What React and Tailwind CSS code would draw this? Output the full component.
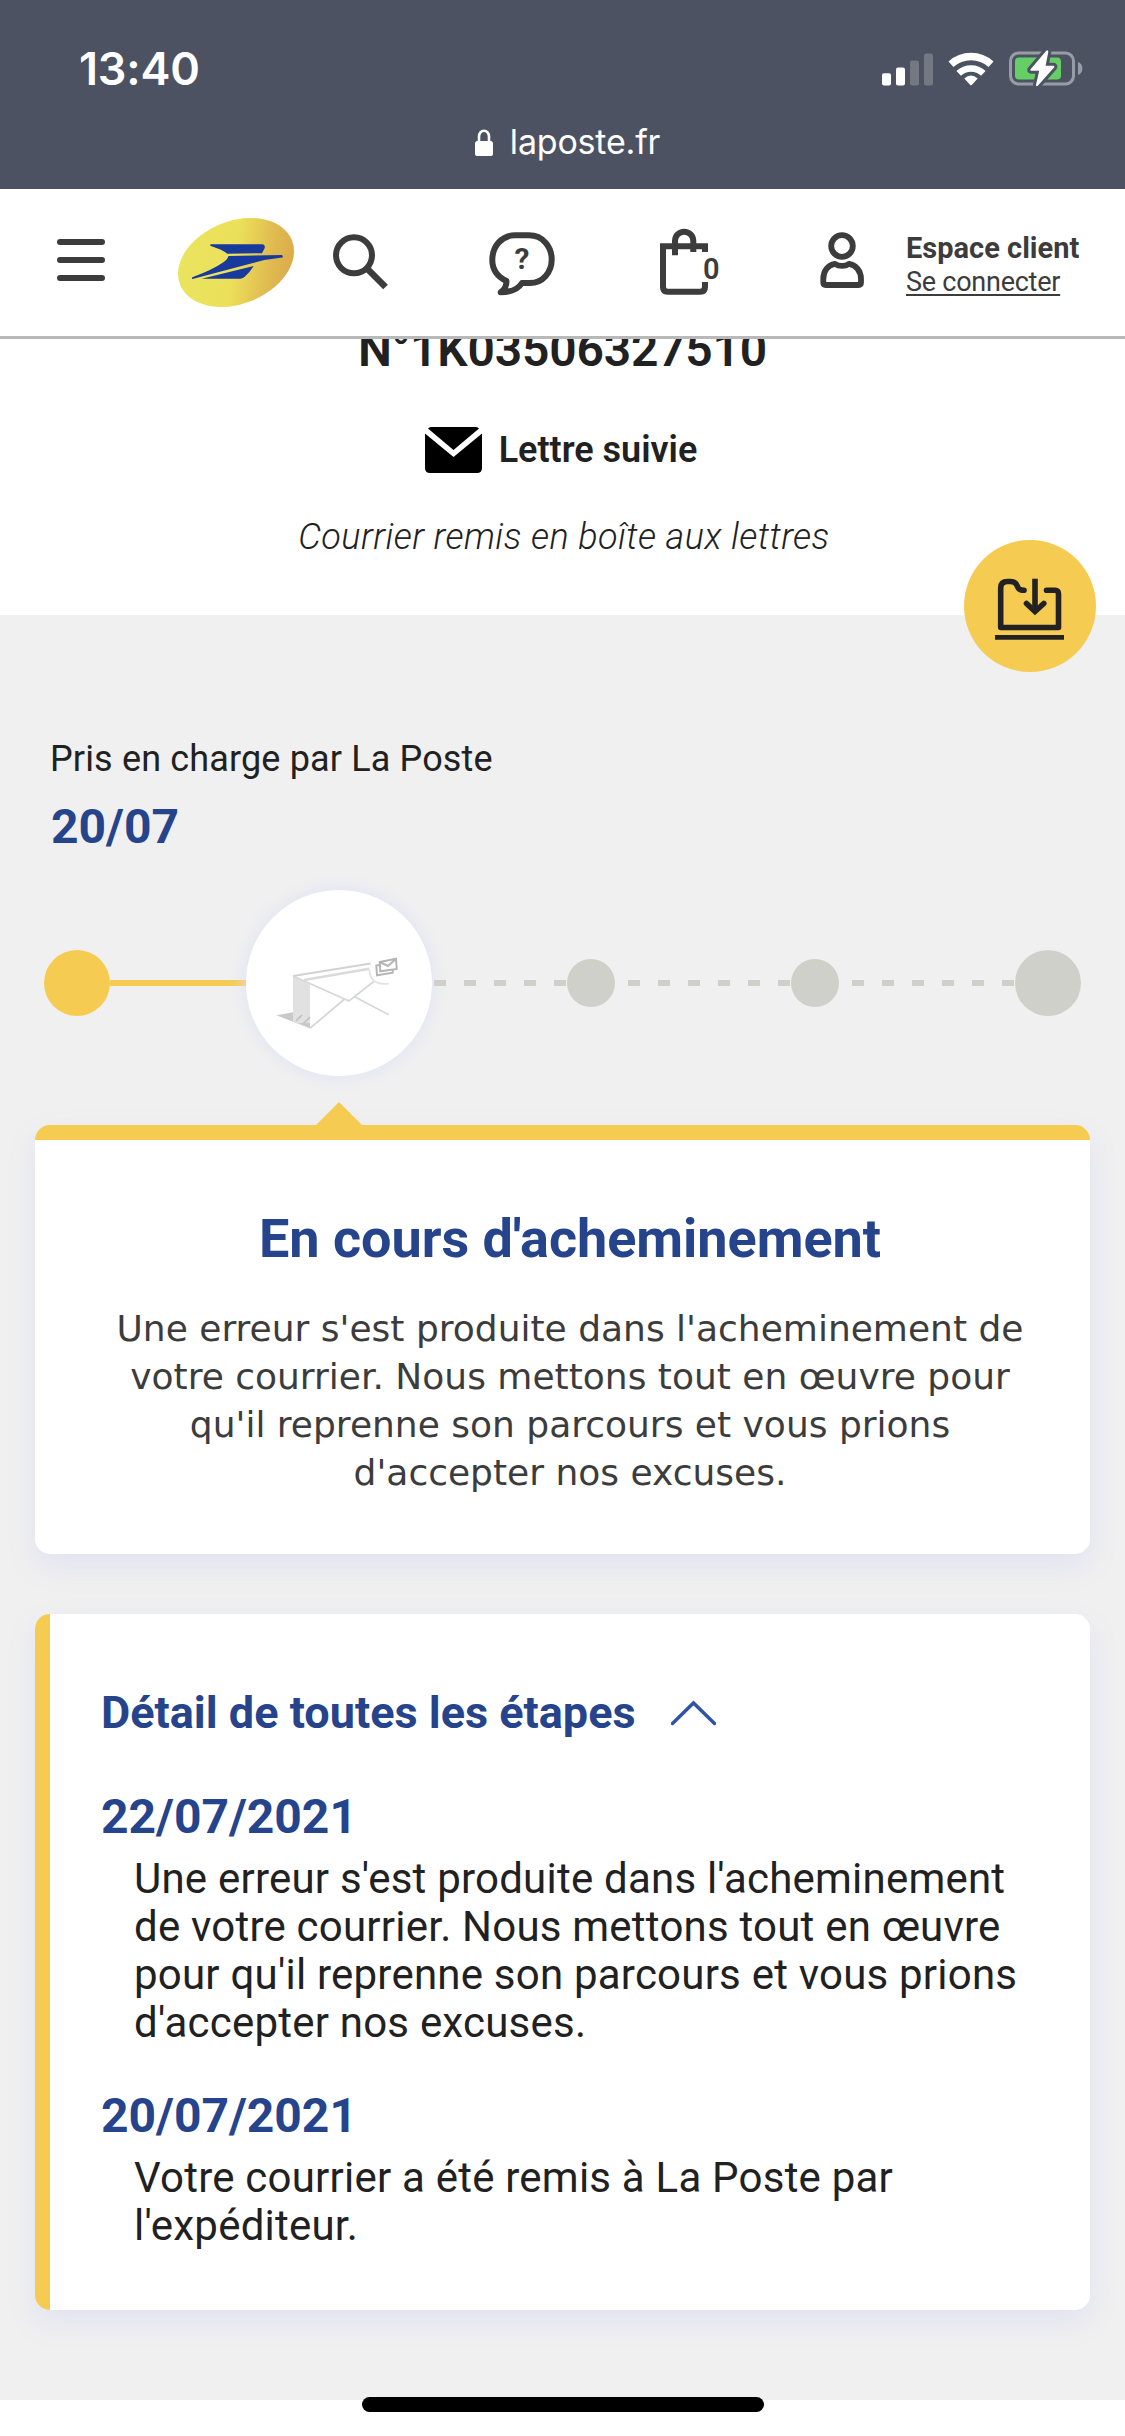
const steps = [
  {
    date: "22/07/2021",
    text: "Une erreur s'est produite dans l'acheminement de votre courrier. Nous mettons tout en œuvre pour qu'il reprenne son parcours et vous prions d'accepter nos excuses.",
  },
  {
    date: "20/07/2021",
    text: "Votre courrier a été remis à La Poste par l'expéditeur.",
  },
];

function StatusBar() {
  return (
    <div className="h-[189px] bg-[#4c5261] font-['Inter',sans-serif] text-white">
      <div className="flex h-[116px] items-center justify-between pt-[21px] pr-[41px] pl-[79px]">
        <span className="text-[45px] leading-none font-semibold tracking-[-0.2px]">13:40</span>
        <div className="flex items-center">
          <svg width="51" height="36" viewBox="0 0 51 36" fill="#fff">
            <rect x="0" y="22.2" width="9" height="12.3" rx="2" />
            <rect x="14" y="16.5" width="9" height="18" rx="2" />
            <rect x="28" y="9.5" width="9" height="25" rx="2" opacity=".22" />
            <rect x="42" y="2.5" width="9" height="32" rx="2" opacity=".22" />
          </svg>
          <svg className="ml-[14px]" width="48" height="36" viewBox="0 0 48 36" fill="none" stroke="#fff">
            <path d="M4 13.2a29.8 29.8 0 0 1 40 0" strokeWidth="7.4" />
            <path d="M11.7 22.4a18 18 0 0 1 24.6 0" strokeWidth="6.6" />
            <path d="M17.3 27.6Q24 21.4 30.7 27.6L24.7 34q-.7.7-1.4 0Z" fill="#fff" stroke="none" />
          </svg>
          <svg className="ml-[13px]" width="76" height="37" viewBox="0 0 76 37">
            <rect x="2.5" y="3" width="63" height="31" rx="8" fill="none" stroke="#989ca6" strokeWidth="3" />
            <rect x="7" y="7.5" width="46" height="22" rx="4" fill="#65cf66" />
            <path d="M70 12a7 7 0 0 1 0 13Z" fill="#989ca6" />
            <path
              d="M38.3.8 22.6 19.2q-1 1.5.8 1.6h7.8L28 34.8q0 2.2 1.8 1L46 17.6q1-1.8-.8-1.8h-7.6L40.3 2Q40.3-.5 38.3.8Z"
              fill="#fff"
              stroke="#4c5261"
              strokeWidth="6"
              paintOrder="stroke"
            />
          </svg>
        </div>
      </div>
      <div className="flex h-[52px] items-center justify-center gap-[17px] pl-[10px]">
        <svg width="18" height="27" viewBox="0 0 18 27">
          <path d="M4 13V7.5a5 5.8 0 0 1 10 0V13" fill="none" stroke="#fff" strokeWidth="2.6" />
          <rect y="12" width="18" height="15" rx="2.6" fill="#fff" />
        </svg>
        <span className="text-[34px] leading-none tracking-[-0.2px]">laposte.fr</span>
      </div>
    </div>
  );
}

function Logo() {
  return (
    <svg className="ml-[72px]" width="118" height="90" viewBox="0 0 118 90">
      <defs>
        <linearGradient id="gold" x1="0" y1="0.3" x2="1" y2="0.7">
          <stop offset="0" stopColor="#eae45f" />
          <stop offset=".48" stopColor="#ece05a" />
          <stop offset=".8" stopColor="#dfb950" />
          <stop offset="1" stopColor="#dba84b" />
        </linearGradient>
      </defs>
      <ellipse cx="59" cy="45.5" rx="60.2" ry="41.5" transform="rotate(-21.7 59 45.5)" fill="url(#gold)" />
      <g fill="#173a9c">
        <path d="M33.5 27.3H85q3.5.3 2.6 4L85 36.2 50.3 36.8Q45 32.5 33.2 28.8Z" />
        <path d="M51.5 39 104.8 38q1.8 1 .6 2.5Q90 42 76 46L15.5 62Q14 61 16 60 36 52.5 46 45.5 50.5 42.5 51.5 39Z" />
        <path d="M76.7 49 24.7 61.7H63.5q2.5-.4 4.5-2.2Q73 55 76.7 49Z" />
      </g>
    </svg>
  );
}

function NavBar() {
  return (
    <header className="flex h-[150px] items-start border-b-3 border-[#b9b9b9] bg-white pt-[28px] pl-[57px] text-[#3c3c3c]">
      <svg width="48" height="90" viewBox="0 0 48 90" stroke="currentColor" strokeWidth="6" strokeLinecap="round">
        <path d="M3 25H45M3 43H45M3 61H45" />
      </svg>
      <Logo />
      <svg className="ml-[37px]" width="58" height="90" viewBox="0 0 58 90" fill="none" stroke="currentColor" strokeWidth="6">
        <circle cx="22" cy="38.3" r="18" />
        <path d="M34.5 51 53.5 70" strokeWidth="6.6" />
      </svg>
      <svg className="ml-[98px]" width="70" height="90" viewBox="0 0 70 90">
        <path
          d="M27 18.3H41C55 18.3 63.7 30 63.7 42.5S55 66 42 66H34C30.5 71.5 23 75.3 12.7 75.3 17 72.5 18.5 69 18.5 64 10 60 4.3 53 4.3 43 4.3 29 14 18.3 27 18.3Z"
          fill="none"
          stroke="currentColor"
          strokeWidth="6"
          strokeLinejoin="round"
        />
        <text x="34" y="52" textAnchor="middle" fill="currentColor" className="font-['Roboto',sans-serif] text-[30px] font-bold">
          ?
        </text>
      </svg>
      <svg className="ml-[101px]" width="64" height="90" viewBox="0 0 64 90">
        <path
          d="M46 35V29.3H4V70q0 4.7 4.7 4.7H41.3Q46 74.7 46 70V65M16 38.3V23.8a9.15 9.15 0 0 1 18.3 0V35"
          fill="none"
          stroke="currentColor"
          strokeWidth="6"
        />
        <text x="52.3" y="62" textAnchor="middle" fill="currentColor" className="font-['Roboto',sans-serif] text-[29px] font-semibold">
          0
        </text>
      </svg>
      <svg className="ml-[96px]" width="46" height="90" viewBox="0 0 46 90" fill="none" stroke="currentColor" strokeWidth="5.8" strokeLinejoin="round">
        <circle cx="23" cy="29" r="10.8" />
        <path d="M16 46.8C9 48 4.3 54 4.3 62V65.5Q4.3 68 6.8 68H39.5Q42 68 42 65.5V62C42 54 37 48 30 46.8 26 49.5 20 49.5 16 46.8Z" />
      </svg>
      <div className="ml-[41px] flex flex-col items-start pt-[14px] leading-[34px] whitespace-nowrap">
        <span className="text-[29px] font-bold">Espace client</span>
        <a className="text-[27px] tracking-[-0.25px] underline decoration-2 underline-offset-[3px]">Se connecter</a>
      </div>
    </header>
  );
}

function Dashes({ className }) {
  return (
    <div
      className={`h-[6px] bg-[repeating-linear-gradient(90deg,#cfd0ca_0px,#cfd0ca_12px,transparent_12px,transparent_30px)] ${className}`}
    />
  );
}

function PackageDrawing() {
  return (
    <svg width="186" height="186" viewBox="4 0 186 186" fill="none" stroke="#d6d8d8" strokeWidth="1.8">
      <path d="M34.3 125.3 51 122.3 68 138.3Z" fill="#c9c9c9" stroke="none" />
      <path d="M51 86 68 93.3V138.3L51 131.7Z" fill="#e1e1e1" stroke="none" />
      <path d="M54 131 60 125M61 134 68 127" stroke="#bdbdbd" strokeWidth="1.5" />
      <path d="M56 133 68 138.3V133Z" fill="#c9c9c9" stroke="none" />
      <path d="M51 86 128.7 73.5" stroke="#d2d2d2" strokeWidth="2" />
      <path d="M62 90 127.3 78.7" stroke="#dadada" strokeWidth="2.6" />
      <path d="M51 86 107 111 132.7 90.7M68 138.3 102.3 109.3M113 107 146.7 124.7" />
      <path d="M127.3 79Q127.5 95.5 146.7 93.7" stroke="#e2e2e2" />
      <g stroke="#b5b5b5" strokeWidth="2">
        <path d="M137.7 72 154 68.7 154.7 79 138.3 81.3ZM137.7 72 146 76 154 68.7" />
        <path d="M137.5 75 134.3 75.6 135 85.3 150.7 82.7V80" />
      </g>
    </svg>
  );
}

function Progress() {
  return (
    <div className="mt-[33px] flex items-center pl-[44px]">
      <div className="size-[66px] rounded-full bg-[#f6cb51]" />
      <div className="h-[6px] w-[136px] bg-[#f6cb51]" />
      <div className="size-[186px] rounded-full bg-white shadow-[0_0_18px_#dfe0f5]">
        <PackageDrawing />
      </div>
      <Dashes className="ml-[2px] w-[132px]" />
      <div className="ml-px size-[48px] rounded-full bg-[#cfd0ca]" />
      <Dashes className="ml-[13px] w-[162px]" />
      <div className="ml-px size-[48px] rounded-full bg-[#cfd0ca]" />
      <Dashes className="ml-[13px] w-[162px]" />
      <div className="ml-px size-[66px] rounded-full bg-[#cfd0ca]" />
    </div>
  );
}

function DownloadButton() {
  return (
    <button className="absolute top-[-75px] right-[29px] size-[132px] rounded-full bg-[#f6cb51]">
      <svg width="132" height="132" viewBox="0 0 132 132" fill="none" stroke="#222" strokeWidth="5.6" strokeLinecap="round" strokeLinejoin="round">
        <path d="M82.5 50.3H91Q94.5 50.3 94.5 54V87.5H36.7V48Q36.7 41.5 43.5 41.5H46.5C51 41.5 52.5 43.5 53.5 46.5 54.5 49.5 56 50.3 60 50.3" />
        <path d="M71 38.7V70" strokeLinecap="butt" />
        <path d="M62.5 63.5 71 71.5 79.8 63.5" strokeLinejoin="miter" />
        <path d="M31 97.3H100" strokeWidth="4.8" strokeLinecap="butt" />
      </svg>
    </button>
  );
}

export default function App() {
  return (
    <div className="relative flex h-[2436px] w-[1125px] flex-col overflow-hidden bg-white font-['Roboto',sans-serif] text-[#212121]">
      <StatusBar />
      <NavBar />

      {/* the tracking number is scrolled partly under the nav bar */}
      <section className="flex h-[276px] flex-col items-center overflow-hidden">
        <h1 className="-mt-[13px] text-[48px] leading-[48px] font-semibold tracking-[-0.2px]">N°1K03506327510</h1>
        <div className="mt-[52px] mr-[3px] flex items-center gap-[17px]">
          <svg width="57" height="46" viewBox="0 0 57 46" fill="#000">
            <path d="M0 6.5 28.5 30 57 6.5V41Q57 46 52 46H5Q0 46 0 41Z" />
            <path d="M3 1.5Q4 0 6 0H51Q53 0 54 1.5L28.5 23Z" />
          </svg>
          <span className="text-[36px] leading-[48px] font-semibold">Lettre suivie</span>
        </div>
        <p className="mt-[39px] ml-[3px] text-[36px] leading-[48px] font-light tracking-[0.45px] italic">Courrier remis en boîte aux lettres</p>
      </section>

      <main className="relative h-[1785px] bg-[#f0f0f0] pt-[120px]">
        <DownloadButton />

        <p className="pl-[50px] text-[36px] leading-[48px] tracking-[0.15px]">Pris en charge par La Poste</p>
        <p className="mt-[14px] pl-[51px] text-[48px] leading-[60px] font-bold text-[#26448b]">20/07</p>

        <Progress />

        <div className="mt-[26px] ml-[316px] h-[23px] w-[46px] bg-[#f6cb51] [clip-path:polygon(50%_0,100%_100%,0_100%)]" />
        <div className="mx-[35px] h-[429px] rounded-[15px] border-t-[15px] border-[#f6cb51] bg-white pt-[66px] pr-[55px] pl-[70px] text-center shadow-[0_12px_30px_#e1e2f1]">
          <h2 className="text-[54px] leading-[66px] font-bold tracking-[-0.05px] text-[#26448b]">En cours d'acheminement</h2>
          <p className="mt-[33px] font-['DejaVu_Sans',sans-serif] text-[36px] leading-[48px] text-[#3c3c3c]">
            {steps[0].text}
          </p>
        </div>

        <div className="mx-[35px] mt-[60px] h-[696px] rounded-[15px] border-l-[15px] border-[#f6cb51] bg-white pt-[72px] pr-[57px] pl-[51px] shadow-[0_12px_30px_#e1e2f1]">
          <div className="flex items-center gap-[35px] text-[#26448b]">
            <h3 className="text-[45px] leading-[54px] font-bold">Détail de toutes les étapes</h3>
            <svg width="45" height="26" viewBox="0 0 45 26" fill="none" stroke="#2f53a5" strokeWidth="3.4" strokeLinecap="round">
              <path d="M1.5 23.5 22.5 3 43.5 23.5" />
            </svg>
          </div>
          <div className="mt-[47px] flex flex-col gap-[39px]">
            {steps.map((step) => (
              <div key={step.date}>
                <p className="text-[48px] leading-[60px] font-bold text-[#26448b]">{step.date}</p>
                <p className="mt-[8px] pl-[33px] text-[42px] leading-[48px] tracking-[0.22px]">{step.text}</p>
              </div>
            ))}
          </div>
        </div>
      </main>

      <div className="absolute bottom-[24px] left-[362px] h-[15px] w-[402px] rounded-full bg-black" />
    </div>
  );
}
